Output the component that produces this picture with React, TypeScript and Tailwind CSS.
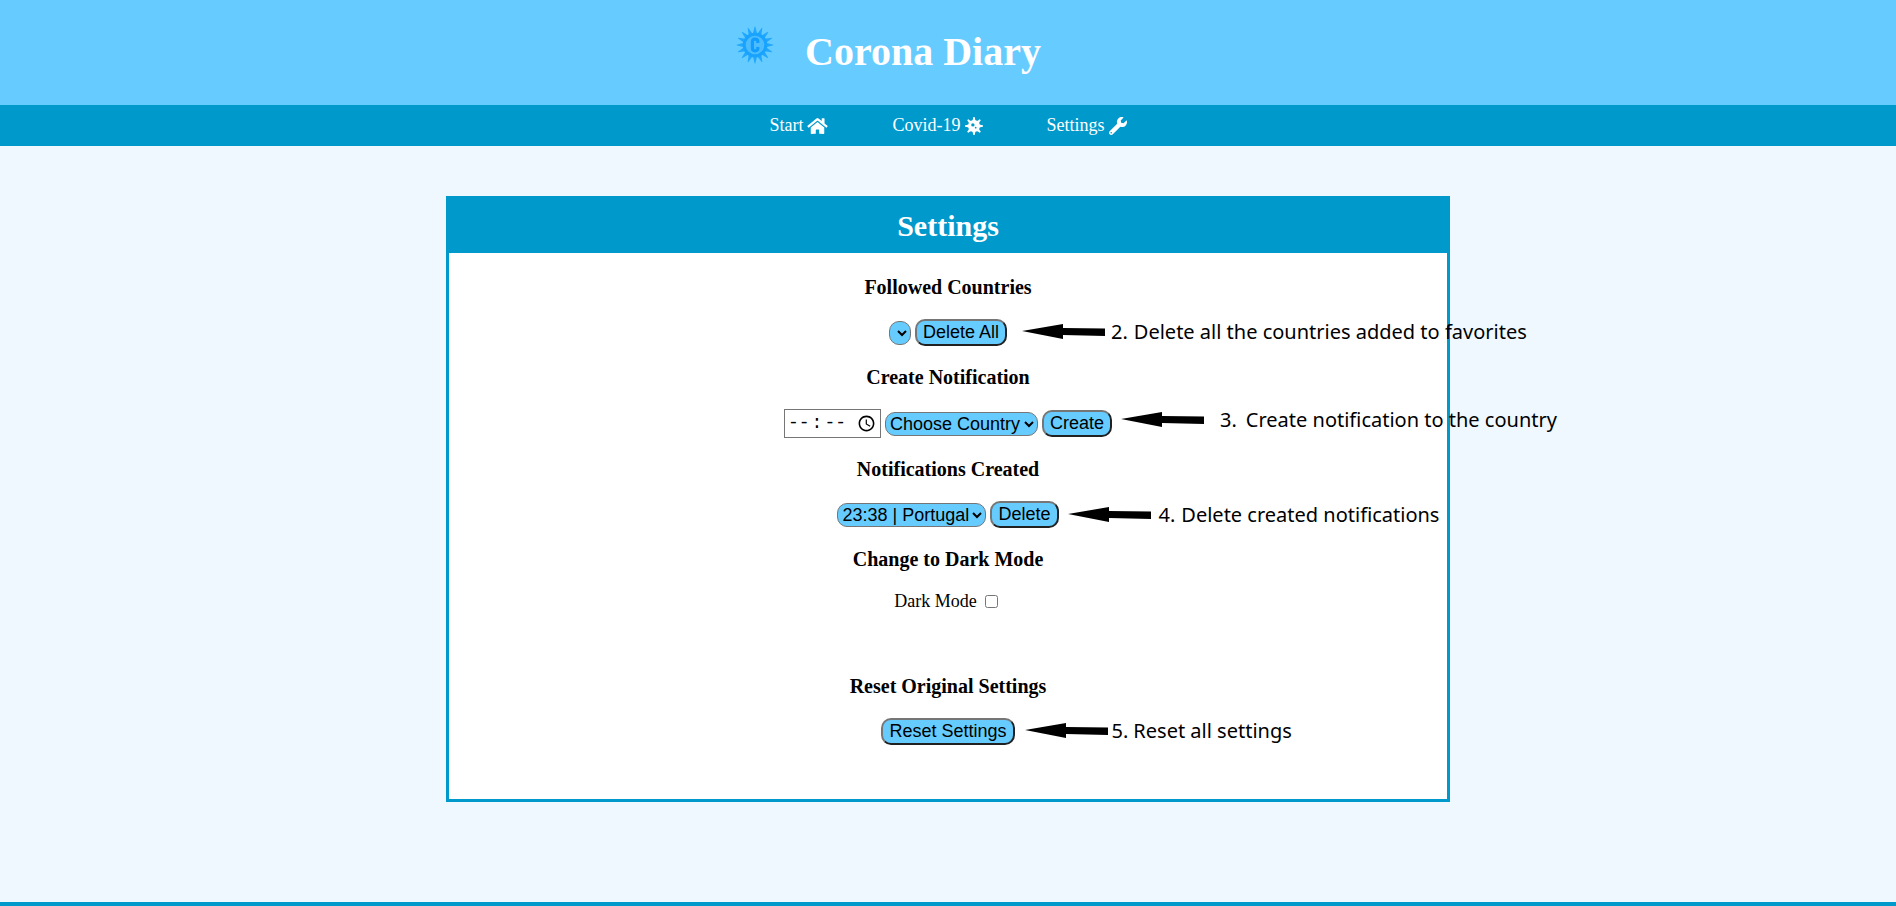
import React, { useState } from "react";
import { FaHome, FaVirus, FaWrench } from "react-icons/fa";

const control = "bg-[#66ccff] text-black font-['Liberation_Sans',Arial,sans-serif] text-[18px] leading-[normal]";
const button = control + " rounded-[10px] [border:2px_outset_#767676] px-[6px] py-px";
const select = control + " rounded-[10px] border border-[#767676]";

function Logo() {
  const rays = Array.from({ length: 16 }, (_, i) => i * 22.5);
  return (
    <svg viewBox="-20 -20 40 40" className="h-10 w-10" aria-hidden="true">
      <g fill="#22a7ff">
        {rays.map((a) => (
          <path key={a} d="M-2.2 -11 L-0.3 -18.5 H0.3 L2.2 -11 Z" transform={`rotate(${a})`} />
        ))}
      </g>
      <circle r="10.8" fill="#4dbcff" stroke="#18a3ff" strokeWidth="3" />
      <path d="M2.8 -2 V-4 Q2.4 -5.8 0 -5.8 Q-2.6 -5.8 -2.6 -3 V3 Q-2.6 5.8 0 5.8 Q2.4 5.8 2.8 4 V2" fill="none" stroke="#109dff" strokeWidth="3.2" />
    </svg>
  );
}

function Arrow() {
  return (
    <svg viewBox="0 0 83 18" className="h-[18px] w-[83px] shrink-0" aria-hidden="true">
      <path d="M0 8 L41 1 V5 L83 5.5 V13 L41 12 V16 Z" fill="#000" />
    </svg>
  );
}

function Note({ number, text, place, gap = "ml-[6px]", textGap = "ml-[6px]" }: { number: string; text: string; place: string; gap?: string; textGap?: string }) {
  return (
    <div className={"absolute left-full flex items-center whitespace-nowrap font-['Noto_Sans',sans-serif] text-[20px] leading-[28px] " + place}>
      <Arrow />
      <span className={gap}>{number}</span>
      <span className={textGap}>{text}</span>
    </div>
  );
}

function Section({ title, children }: { title: string; children: React.ReactNode }) {
  return (
    <section className="flex flex-col items-center">
      <h3 className="text-[20px] font-bold leading-[24px]">{title}</h3>
      <div className="relative mt-5 flex items-center gap-1">{children}</div>
    </section>
  );
}

export default function App() {
  const [dark, setDark] = useState(false);
  return (
    <div className="flex min-h-screen flex-col bg-[#f0f8ff] font-['Liberation_Serif','Times_New_Roman',serif] text-[18px] text-black">
      <header className="flex h-[105px] justify-center bg-[#66ccff]">
        <div className="mr-[120px] flex items-start pt-[25px]">
          <Logo />
          <h1 className="ml-[30px] text-[40px] font-bold leading-[54px] text-white">Corona Diary</h1>
        </div>
      </header>
      <nav className="flex h-[41px] items-center justify-center gap-16 bg-[#0099cc] text-white">
        <a href="#start" className="flex items-center gap-1">Start <FaHome className="h-[18px] w-[21px]" /></a>
        <a href="#covid" className="flex items-center gap-1">Covid-19 <FaVirus /></a>
        <a href="#settings" className="flex items-center gap-1">Settings <FaWrench /></a>
      </nav>
      <main className="mx-auto mt-[50px] w-[53%] border-[3px] border-[#0099cc] bg-white pb-[54px]">
        <h2 className="bg-[#0099cc] pb-[7px] pt-[7px] text-center text-[30px] font-bold leading-[40px] text-white">Settings</h2>
        <div className="flex flex-col gap-[19px] pt-[22px]">
          <Section title="Followed Countries">
            <select aria-label="Followed countries" className={select} />
            <button type="button" className={button}>Delete All</button>
            <Note number="2." text="Delete all the countries added to favorites" place="ml-[15px] -mt-[2px]" />
          </Section>
          <Section title="Create Notification">
            <input type="time" aria-label="Notification time" className="h-[29px] w-[97px] border border-[#767676] bg-white px-px font-['Liberation_Mono',monospace] text-[18px] [&::-webkit-datetime-edit-ampm-field]:hidden [&::-webkit-datetime-edit-hour-field]:px-[2px] [&::-webkit-datetime-edit-minute-field]:px-[2px]" />
            <select aria-label="Country" className={select}><option>Choose Country</option></select>
            <button type="button" className={button}>Create</button>
            <Note number="3." text="Create notification to the country" place="ml-[9px] -mt-[8px]" gap="ml-4" textGap="ml-[9px]" />
          </Section>
          <Section title="Notifications Created">
            <select aria-label="Notifications created" className={select}><option>23:38 | Portugal</option></select>
            <button type="button" className={button}>Delete</button>
            <Note number="4." text="Delete created notifications" place="ml-[9px]" gap="ml-2" />
          </Section>
          <Section title="Change to Dark Mode">
            <label htmlFor="dark" className="leading-[20px]">Dark Mode</label>
            <input id="dark" type="checkbox" className="mx-1" checked={dark} onChange={(e) => setDark(e.target.checked)} />
          </Section>
          <div className="mt-11">
            <Section title="Reset Original Settings">
              <button type="button" className={button}>Reset Settings</button>
              <Note number="5." text="Reset all settings" place="ml-[10px] -mt-[2px]" gap="ml-1" textGap="ml-[5px]" />
            </Section>
          </div>
        </div>
      </main>
      <footer className="mt-auto h-1 bg-[#0099cc]" />
    </div>
  );
}
